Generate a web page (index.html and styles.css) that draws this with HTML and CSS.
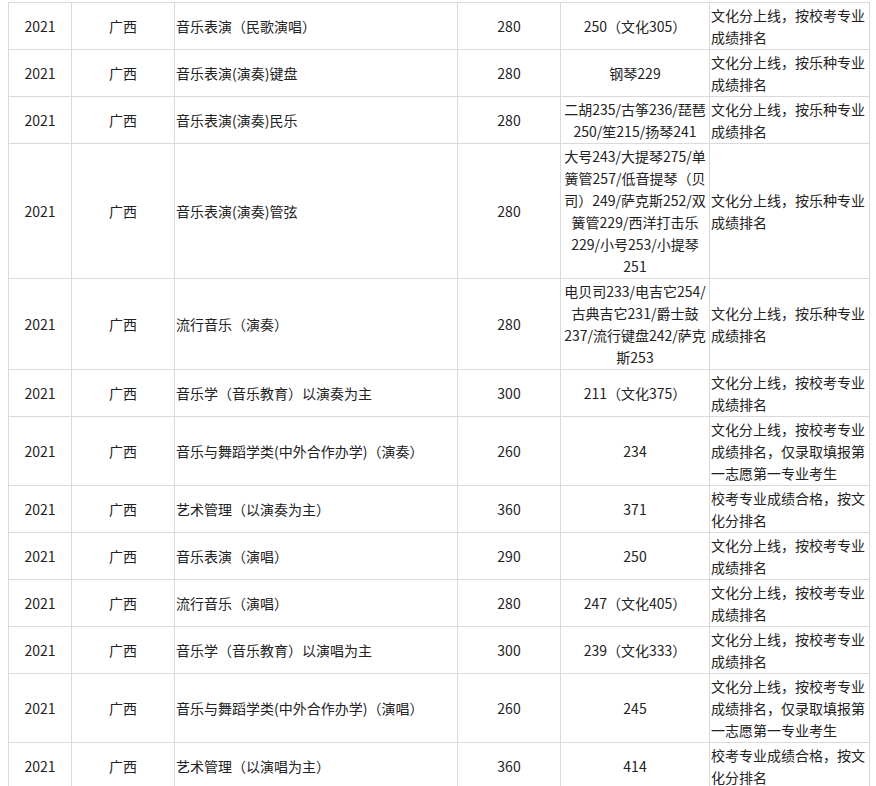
FILE: index.html
```html
<!DOCTYPE html>
<html lang="zh-CN">
<head>
<meta charset="utf-8">
<title>2021 广西 录取线</title>
<link rel="stylesheet" href="styles.css">
</head>
<body>
<table class="score-table">
  <colgroup>
    <col class="c-year"><col class="c-prov"><col class="c-major"><col class="c-line"><col class="c-score"><col class="c-note">
  </colgroup>
  <tbody>
    <tr><td class="ctr">2021</td><td class="ctr">广西</td><td>音乐表演（民歌演唱）</td><td class="ctr">280</td><td class="ctr">250（文化305）</td><td>文化分上线，按校考专业<br>成绩排名</td></tr>
    <tr><td class="ctr">2021</td><td class="ctr">广西</td><td>音乐表演(演奏)键盘</td><td class="ctr">280</td><td class="ctr">钢琴229</td><td>文化分上线，按乐种专业<br>成绩排名</td></tr>
    <tr><td class="ctr">2021</td><td class="ctr">广西</td><td>音乐表演(演奏)民乐</td><td class="ctr">280</td><td class="ctr">二胡235/古筝236/琵琶<br>250/笙215/扬琴241</td><td>文化分上线，按乐种专业<br>成绩排名</td></tr>
    <tr><td class="ctr">2021</td><td class="ctr">广西</td><td>音乐表演(演奏)管弦</td><td class="ctr">280</td><td class="ctr">大号243/大提琴275/单<br>簧管257/低音提琴（贝<br>司）249/萨克斯252/双<br>簧管229/西洋打击乐<br>229/小号253/小提琴<br>251</td><td>文化分上线，按乐种专业<br>成绩排名</td></tr>
    <tr><td class="ctr">2021</td><td class="ctr">广西</td><td>流行音乐（演奏）</td><td class="ctr">280</td><td class="ctr">电贝司233/电吉它254/<br>古典吉它231/爵士鼓<br>237/流行键盘242/萨克<br>斯253</td><td>文化分上线，按乐种专业<br>成绩排名</td></tr>
    <tr><td class="ctr">2021</td><td class="ctr">广西</td><td>音乐学（音乐教育）以演奏为主</td><td class="ctr">300</td><td class="ctr">211（文化375）</td><td>文化分上线，按校考专业<br>成绩排名</td></tr>
    <tr><td class="ctr">2021</td><td class="ctr">广西</td><td>音乐与舞蹈学类(中外合作办学)（演奏）</td><td class="ctr">260</td><td class="ctr">234</td><td>文化分上线，按校考专业<br>成绩排名，仅录取填报第<br>一志愿第一专业考生</td></tr>
    <tr><td class="ctr">2021</td><td class="ctr">广西</td><td>艺术管理（以演奏为主）</td><td class="ctr">360</td><td class="ctr">371</td><td>校考专业成绩合格，按文<br>化分排名</td></tr>
    <tr><td class="ctr">2021</td><td class="ctr">广西</td><td>音乐表演（演唱）</td><td class="ctr">290</td><td class="ctr">250</td><td>文化分上线，按校考专业<br>成绩排名</td></tr>
    <tr><td class="ctr">2021</td><td class="ctr">广西</td><td>流行音乐（演唱）</td><td class="ctr">280</td><td class="ctr">247（文化405）</td><td>文化分上线，按校考专业<br>成绩排名</td></tr>
    <tr><td class="ctr">2021</td><td class="ctr">广西</td><td>音乐学（音乐教育）以演唱为主</td><td class="ctr">300</td><td class="ctr">239（文化333）</td><td>文化分上线，按校考专业<br>成绩排名</td></tr>
    <tr><td class="ctr">2021</td><td class="ctr">广西</td><td>音乐与舞蹈学类(中外合作办学)（演唱）</td><td class="ctr">260</td><td class="ctr">245</td><td>文化分上线，按校考专业<br>成绩排名，仅录取填报第<br>一志愿第一专业考生</td></tr>
    <tr><td class="ctr">2021</td><td class="ctr">广西</td><td>艺术管理（以演唱为主）</td><td class="ctr">360</td><td class="ctr">414</td><td>校考专业成绩合格，按文<br>化分排名</td></tr>
  </tbody>
</table>
</body>
</html>
```

FILE: styles.css
```css
html, body {
  margin: 0;
  padding: 0;
  background: #ffffff;
}
body {
  padding: 2px 0 0 8px;
  font-family: "Microsoft YaHei", "Noto Sans CJK SC", "Noto Sans", sans-serif;
  font-size: 14px;
  color: #222222;
}
.score-table {
  border-collapse: collapse;
  table-layout: fixed;
  width: 861px;
}
.c-year { width: 63px; }
.c-prov { width: 103px; }
.c-major { width: 283px; }
.c-line { width: 103px; }
.c-score { width: 149px; }
.c-note { width: 160px; }
.score-table td {
  border: 1px solid #dadada;
  padding: 1px 1px;
  line-height: 22px;
  vertical-align: middle;
  text-align: left;
  white-space: nowrap;
  overflow: hidden;
}
.score-table td.ctr {
  text-align: center;
}
```
